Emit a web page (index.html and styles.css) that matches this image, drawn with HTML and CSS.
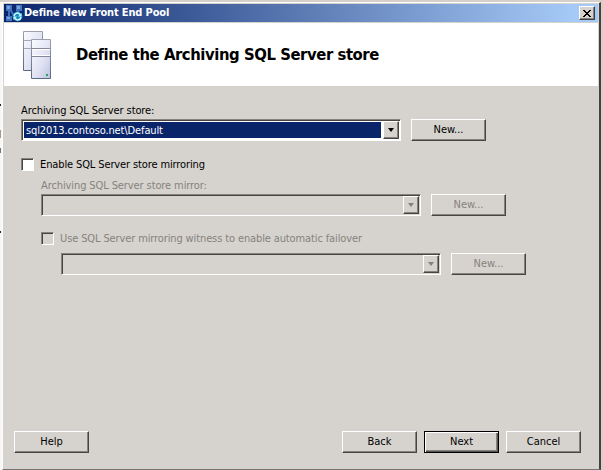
FILE: index.html
```html
<!DOCTYPE html>
<html lang="en">
<head>
<meta charset="utf-8">
<title>Define New Front End Pool</title>
<link rel="stylesheet" href="styles.css">
</head>
<body>
<i class="sliver s1"></i><i class="sliver s2"></i><i class="sliver s3"></i><i class="sliver s4"></i>
<main class="window">
  <div class="titlebar">
    <svg class="app-icon" width="17" height="17" viewBox="0 0 17 17">
      <path d="M4 4l4 7M14 4l-5 6M3 4v9" stroke="#3f6fbd" stroke-width="2" fill="none"/>
      <path d="M0 0h6v6H0zM10 0h6v6h-6zM0 11h6v5H0z" fill="#4573bd"/>
      <path d="M1 1h3v3H1zM11 1h3v3h-3zM1 12h3v2H1z" fill="#74a3de"/>
      <ellipse cx="11.5" cy="11.5" rx="5" ry="4.7" fill="#1789bc"/>
      <path d="M8 11c.5-3 4-4 6-1.500M15 12c-.5 3-4 4-6 1.500" fill="none" stroke="#c3fcff" stroke-width="1.600"/>
      <path d="M15.500 8v3.500H12zM7.500 15v-3.500H11z" fill="#c3fcff"/>
    </svg>
    <span class="caption">Define New Front End Pool</span>
    <button class="close" aria-label="Close"><svg width="8" height="7" viewBox="0 0 8 7" shape-rendering="crispEdges"><path d="M0 0h2v1h1v1h2V1h1V0h2v1H7v1H6v1H5v1h1v1h1v1h1v1H6V6H5V5H3v1H2v1H0V6h1V5h1V4h1V3H2V2H1V1H0z"/></svg></button>
  </div>
  <header class="banner">
    <svg class="servers" width="29" height="49" viewBox="0 0 29 49">
      <defs>
        <linearGradient id="case" x1="0" y1="0" x2="1" y2="1"><stop offset="0" stop-color="#fbfbff"/><stop offset=".6" stop-color="#dfe1f3"/><stop offset="1" stop-color="#bac2df"/></linearGradient>
        <linearGradient id="edge" x1="0" y1="0" x2="0" y2="1"><stop offset="0" stop-color="#9c9fae"/><stop offset="1" stop-color="#5c6985"/></linearGradient>
      </defs>
      <path d="M.5.500h19v39H.500z" fill="url(#case)" stroke="url(#edge)"/>
      <path d="M1 9.500h18M1 17.500h18" stroke="#a6a8b9"/>
      <path d="M8.500 8.500h19v39h-19z" fill="url(#case)" stroke="url(#edge)"/>
      <path d="M9 17.500h18M9 25.500h18" stroke="#868898"/>
      <path d="M9 18.500h18M9 24.500h18" stroke="#fff"/>
      <path d="M23 43h2v2h-2z" fill="#27a65b"/>
    </svg>
    <h1>Define the Archiving SQL Server store</h1>
  </header>
  <section class="form">
    <label>Archiving SQL Server store:</label>
    <div class="row">
      <div class="combo active"><span class="value">sql2013.contoso.net\Default</span><span class="drop"><i></i></span></div>
      <button class="btn">New...</button>
    </div>
    <div class="check c1"><i class="box"></i><span>Enable SQL Server store mirroring</span></div>
    <div class="sub disabled">
      <label>Archiving SQL Server store mirror:</label>
      <div class="row">
        <div class="combo"><span class="value"></span><span class="drop"><i></i></span></div>
        <button class="btn" disabled>New...</button>
      </div>
      <div class="check c2"><i class="box"></i><span>Use SQL Server mirroring witness to enable automatic failover</span></div>
      <div class="row nested">
        <div class="combo"><span class="value"></span><span class="drop"><i></i></span></div>
        <button class="btn" disabled>New...</button>
      </div>
    </div>
  </section>
  <footer class="actions">
    <button class="btn help">Help</button>
    <button class="btn">Back</button>
    <button class="btn default">Next</button>
    <button class="btn">Cancel</button>
  </footer>
</main>
</body>
</html>
```
FILE: styles.css
```css
* { box-sizing: border-box; }
body {
  margin: 0;
  width: 603px;
  height: 470px;
  padding: 2px 0 0 2px;
  overflow: hidden;
  background: linear-gradient(#d6cfca 0 2px, transparent 2px), linear-gradient(90deg, #f7f7f5 0 2px, #d5d1cb 2px);
  font: 11px/14px "DejaVu Sans Condensed", "DejaVu Sans", sans-serif;
  font-stretch: condensed;
  color: #000;
}
.sliver { position: absolute; left: 0; width: 1px; height: 2px; background: #222; }
.s1 { top: 104px; }
.s2 { top: 130px; height: 8px; background: #aa9788; }
.s3 { top: 148px; height: 5px; background: #777; }
.s4 { top: 231px; }
.window {
  display: flex;
  flex-direction: column;
  width: 599px;
  height: 468px;
  background: #d6d3ce;
  border: 1px solid #fff;
  border-width: 1px 2px 1px 1px;
  border-right-color: #44423f;
  border-bottom-color: #777571;
  padding: 1px 1px 0;
}
.titlebar {
  display: flex;
  align-items: center;
  height: 18px;
  padding: 0 3px 0 2px;
  background: linear-gradient(90deg, #0a246a, #a6caf7 96%);
  color: #fff;
}
.app-icon { flex: none; }
.caption { width: 146px; margin-left: 1px; font-size: 11px; font-weight: bold; white-space: nowrap; letter-spacing: -.15px; }
.close {
  display: flex;
  align-items: center;
  justify-content: center;
  width: 16px;
  height: 14px;
  padding: 0;
  margin-left: auto;
  background: #d6d3ce;
  border: 1px solid #fff;
  border-right-color: #404040;
  border-bottom-color: #404040;
  box-shadow: inset -1px -1px #85827d;
}
.banner {
  display: flex;
  height: 64px;
  background: #fff;
  border-top: 1px solid #d6d3ce;
}
.servers { margin: 8px 0 0 19px; }
h1 { margin: 20px 0 0 24px; font-size: 16.500px; line-height: 24px; white-space: nowrap; letter-spacing: -.43px; }
.form { padding: 17px 0 0 17px; white-space: nowrap; }
.form label { display: block; height: 16px; line-height: 16px; letter-spacing: -.1px; }
.row { display: flex; gap: 10px; }
.combo {
  display: flex;
  width: 380px;
  height: 22px;
  padding: 1px;
  border: 1px solid #85827d;
  border-right-color: #fff;
  border-bottom-color: #fff;
  box-shadow: inset 1px 1px #484541;
}
.value { flex: 1; height: 16px; margin: 1px 2px 0 1px; padding-left: 2px; line-height: 18px; }
.active { background: #fff; }
.active .value { background: #0a246a; color: #fff; letter-spacing: -.12px; }
.drop {
  display: flex;
  align-items: center;
  justify-content: center;
  width: 16px;
  height: 18px;
  background: #d6d3ce;
  border: 1px solid #fff;
  border-right-color: #484541;
  border-bottom-color: #484541;
  box-shadow: inset -1px -1px #85827d;
}
.drop i { border: 3px solid transparent; border-top: 4px solid #000; border-bottom: 0; }
.btn {
  width: 75px;
  height: 22px;
  padding: 0;
  font: inherit;
  color: #000;
  background: #d6d3ce;
  border: 1px solid #fff;
  border-right-color: #484541;
  border-bottom-color: #484541;
  box-shadow: inset -1px -1px #85827d;
}
.check { display: flex; align-items: center; gap: 6px; height: 14px; letter-spacing: -.12px; }
.check span { line-height: 16px; padding-top: 1px; }
.c1 { margin-top: 16px; }
.box {
  width: 13px;
  height: 13px;
  background: #fff;
  border: 1px solid #85827d;
  border-right-color: #fff;
  border-bottom-color: #fff;
  box-shadow: inset 1px 1px #484541;
}
.sub { padding: 7px 0 0 20px; }
.c2 { margin-top: 15px; }
.nested { margin: 8px 0 0 20px; }
.disabled, .disabled .btn { color: #85827d; }
.disabled .box { background: #d6d3ce; }
.disabled .drop i { border-top-color: #85827d; }
.actions { display: flex; gap: 7px; margin-top: auto; padding: 0 17px 16px 10px; }
.help { margin-right: auto; }
.default { border-color: #000; box-shadow: inset 1px 1px #fff, inset -1px -1px #555, inset -2px -2px #85827d; }
```
